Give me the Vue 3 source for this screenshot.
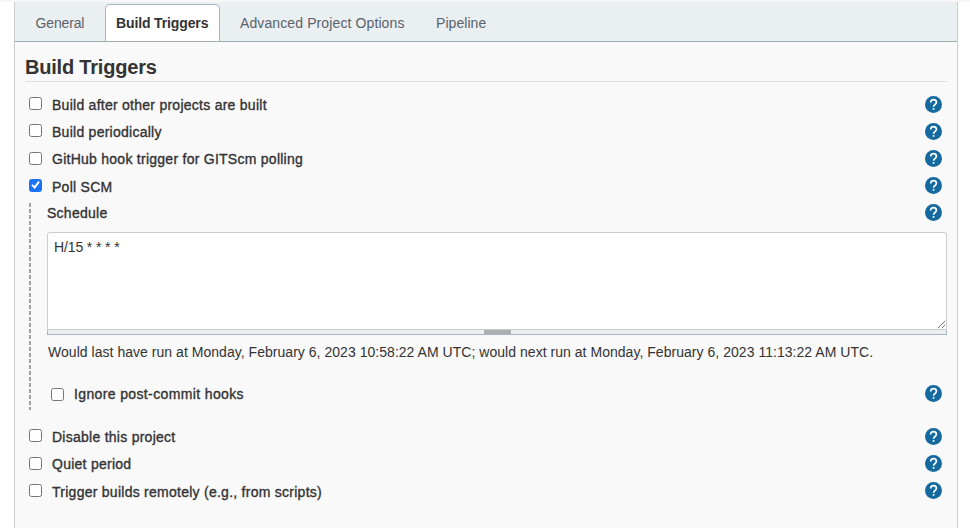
<script setup>
import { ref } from 'vue'

const tabs = [
  { label: 'General', cls: 'general' },
  { label: 'Build Triggers', cls: 'active' },
  { label: 'Advanced Project Options', cls: 'advanced' },
  { label: 'Pipeline', cls: 'pipeline' },
]
const triggers = ref([
  { label: 'Build after other projects are built', on: false },
  { label: 'Build periodically', on: false },
  { label: 'GitHub hook trigger for GITScm polling', on: false },
  { label: 'Poll SCM', on: true },
])
const others = ref([
  { label: 'Disable this project', on: false },
  { label: 'Quiet period', on: false },
  { label: 'Trigger builds remotely (e.g., from scripts)', on: false },
])
const ignoreHooks = ref(false)
const schedule = ref('H/15 * * * *')
</script>

<template>
  <div class="page">
    <main class="panel">
      <nav class="tabs">
        <a v-for="t in tabs" :key="t.label" class="tab" :class="t.cls">{{ t.label }}</a>
      </nav>
      <section class="content">
        <h1>Build Triggers</h1>
        <div v-for="t in triggers" :key="t.label" class="row">
          <label><input v-model="t.on" type="checkbox" /><span>{{ t.label }}</span></label>
          <svg class="help" viewBox="0 0 24 24"><circle cx="12" cy="12" r="12" /><path d="M8 9.2C8 6.6 9.7 5 12.1 5s4 1.6 4 3.8c0 3.2-4 3.3-4 6.2" /><rect x="10.9" y="17" width="2.4" height="2.4" /></svg>
        </div>
        <div class="nested">
          <div class="row schedule-row">
            <span class="title">Schedule</span>
            <svg class="help" viewBox="0 0 24 24"><circle cx="12" cy="12" r="12" /><path d="M8 9.2C8 6.6 9.7 5 12.1 5s4 1.6 4 3.8c0 3.2-4 3.3-4 6.2" /><rect x="10.9" y="17" width="2.4" height="2.4" /></svg>
          </div>
          <div class="editor">
            <textarea v-model="schedule" spellcheck="false"></textarea>
            <svg class="grip" viewBox="0 0 9 9"><path d="M.8 8.2 8.2.8M4.8 8.2l3.4-3.4" /></svg>
          </div>
          <div class="handle"><i></i></div>
          <p>Would last have run at Monday, February 6, 2023 10:58:22 AM UTC; would next run at Monday, February 6, 2023 11:13:22 AM UTC.</p>
          <div class="row hooks">
            <label><input v-model="ignoreHooks" type="checkbox" /><span>Ignore post-commit hooks</span></label>
            <svg class="help" viewBox="0 0 24 24"><circle cx="12" cy="12" r="12" /><path d="M8 9.2C8 6.6 9.7 5 12.1 5s4 1.6 4 3.8c0 3.2-4 3.3-4 6.2" /><rect x="10.9" y="17" width="2.4" height="2.4" /></svg>
          </div>
        </div>
        <div v-for="t in others" :key="t.label" class="row">
          <label><input v-model="t.on" type="checkbox" /><span>{{ t.label }}</span></label>
          <svg class="help" viewBox="0 0 24 24"><circle cx="12" cy="12" r="12" /><path d="M8 9.2C8 6.6 9.7 5 12.1 5s4 1.6 4 3.8c0 3.2-4 3.3-4 6.2" /><rect x="10.9" y="17" width="2.4" height="2.4" /></svg>
        </div>
      </section>
    </main>
  </div>
</template>

<style>
body { margin: 0; background: #fff; }
</style>

<style scoped>
* { box-sizing: border-box; }
.page {
  height: 528px;
  overflow: hidden;
  padding: 0 12px 0 14px;
  border-top: 2px solid #f7f7f7;
  font-family: "Liberation Sans", Arial, sans-serif;
  font-size: 14px;
  color: #333;
}
.panel {
  height: 526px;
  background: #f9f9f9;
  border: solid #ccc;
  border-width: 0 1px;
}
.tabs {
  display: flex;
  height: 40px;
  padding: 2px 0 0 10px;
  background: #eaeff2;
  border-bottom: 1px solid #9eabb3;
}
.tab {
  height: 38px;
  padding: 0 11px;
  line-height: 38px;
  white-space: nowrap;
  color: #5a626b;
}
.general { width: 80px; padding-left: 10.5px; letter-spacing: -.15px; }
.active {
  width: 115px;
  height: 37px;
  padding: 0 0 0 10px;
  line-height: 36px;
  color: #333;
  font-weight: bold;
  letter-spacing: -.13px;
  background: #fff;
  border: 1px solid #a9b6be;
  border-bottom: 0;
  border-radius: 5px 5px 0 0;
}
.advanced { width: 206px; padding-left: 20px; letter-spacing: .11px; }
.pipeline { padding-left: 10px; letter-spacing: .05px; }
.content { padding: 0 10px; }
h1 {
  height: 40px;
  margin: 0 0 9px;
  padding-top: 1px;
  border-bottom: 1px solid #e0e0e0;
  font-size: 20px;
  line-height: 48px;
  letter-spacing: -.2px;
  color: #333;
}
.row {
  display: flex;
  align-items: center;
  justify-content: space-between;
  height: 27.2px;
  padding: 0 5.5px 0 4px;
}
label { display: flex; align-items: center; }
label span, .title {
  line-height: 18px;
  padding-top: 1px;
  letter-spacing: .26px;
  white-space: nowrap;
  -webkit-text-stroke: .35px #333;
}
input {
  appearance: none;
  display: grid;
  place-items: center;
  width: 13px;
  height: 13px;
  margin: 0 10px 1.8px 0;
  background: #fff;
  border: 1px solid #767676;
  border-radius: 2.5px;
}
input:checked { background: #1a73f5; border-color: #1a73f5; }
input:checked::after {
  content: "";
  width: 11px;
  height: 11px;
  background: #fff;
  clip-path: polygon(1.3px 5.8px, 2.7px 4.5px, 4.5px 6.3px, 8.2px 1.3px, 9.8px 2.4px, 4.8px 9.2px);
}
.help { width: 17px; height: 17px; flex: none; margin-bottom: 1px; }
.help circle { fill: #14699e; }
.help path { fill: none; stroke: #fff; stroke-width: 2.4; }
.help rect { fill: #fff; }
.nested {
  height: 207.4px;
  margin: 3px 0 13px 4px;
  padding-left: 18px;
  background: repeating-linear-gradient(#a0a0a0 0 4px, transparent 4px 6px) 0 0 / 2px 100% no-repeat;
}
.schedule-row { height: 20px; padding-left: 0; }
.schedule-row .title { padding-top: .6px; }
.schedule-row .help { margin-bottom: 0; }
.editor { position: relative; height: 98px; margin-top: 9px; }
textarea {
  display: block;
  width: 100%;
  height: 98px;
  padding: 6px;
  resize: none;
  outline: none;
  overflow: hidden;
  border: 1px solid #ccc;
  border-radius: 3px 3px 0 0;
  background: #fff;
  color: #333;
  font: 14px/17px "Liberation Sans", Arial, sans-serif;
  letter-spacing: -.12px;
}
.grip { position: absolute; right: 1px; bottom: 1px; width: 9px; height: 9px; }
.grip path { stroke: #666; fill: none; stroke-width: .9; }
.handle {
  display: flex;
  justify-content: center;
  height: 5px;
  background: #eaeff2;
  border: 1px solid #a9b6be;
  border-top: 0;
}
.handle i { width: 27px; height: 4px; background: #abb0b2; }
p { margin: 8px 0 0 1px; line-height: 19px; white-space: nowrap; letter-spacing: .035px; }
.hooks { margin-top: 19px; }
.hooks input { margin-bottom: 0; }
.hooks span { padding-top: 0; letter-spacing: .37px; }
</style>
